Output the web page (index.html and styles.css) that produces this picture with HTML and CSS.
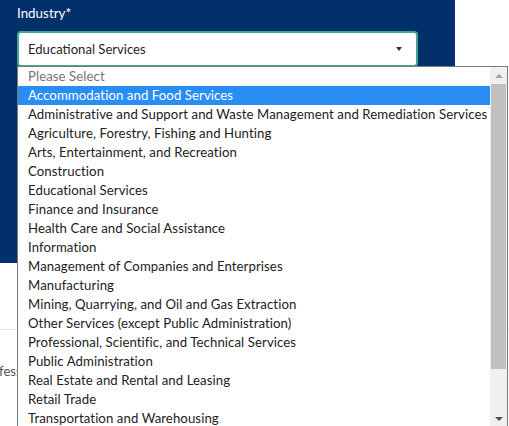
FILE: index.html
```html
<!DOCTYPE html>
<html>
<head>
<meta charset="utf-8">
<link rel="stylesheet" href="styles.css">
</head>
<body>
<div class="page">
  <section class="panel">
    <label class="label">Industry*</label>
    <div class="select">
      <span class="value">Educational Services</span>
      <span class="caret"></span>
    </div>
  </section>
  <div class="below">
    <hr class="rule">
    <div class="cut">fess</div>
  </div>

  <div class="dropdown">
    <ul class="options">
      <li class="placeholder">Please Select</li>
      <li class="active">Accommodation and Food Services</li>
      <li>Administrative and Support and Waste Management and Remediation Services</li>
      <li>Agriculture, Forestry, Fishing and Hunting</li>
      <li>Arts, Entertainment, and Recreation</li>
      <li>Construction</li>
      <li>Educational Services</li>
      <li>Finance and Insurance</li>
      <li>Health Care and Social Assistance</li>
      <li>Information</li>
      <li>Management of Companies and Enterprises</li>
      <li>Manufacturing</li>
      <li>Mining, Quarrying, and Oil and Gas Extraction</li>
      <li>Other Services (except Public Administration)</li>
      <li>Professional, Scientific, and Technical Services</li>
      <li>Public Administration</li>
      <li>Real Estate and Rental and Leasing</li>
      <li>Retail Trade</li>
      <li>Transportation and Warehousing</li>
    </ul>
    <div class="scrollbar">
      <span class="arrow up"></span>
      <span class="thumb"></span>
      <span class="arrow down"></span>
    </div>
  </div>
</div>
</body>
</html>
```

FILE: styles.css
```css
* { box-sizing: border-box; }
html, body { margin: 0; padding: 0; background: #fff; }
body {
  font-family: "Lato", "Open Sans", sans-serif;
  width: 509px;
  height: 426px;
  overflow: hidden;
}
.page { position: relative; width: 509px; height: 426px; }
.panel {
  width: 455px;
  height: 263px;
  background: #02306a;
  padding: 4px 37px 0 17px;
  display: flex;
  flex-direction: column;
}
.label {
  color: #fff;
  font-size: 13.4px;
  line-height: 18px;
  height: 27px;
}
.select {
  width: 401px;
  height: 36px;
  border: 2px solid #3fa79a;
  border-radius: 4px;
  background: #fff;
  display: flex;
  align-items: center;
  padding: 0 14px 0 9px;
}
.value {
  flex: 1;
  color: #212529;
  font-size: 13.1px;
}
.caret {
  width: 0; height: 0;
  border-left: 3px solid transparent;
  border-right: 3px solid transparent;
  border-top: 4px solid #333;
}
.below { padding-top: 66px; }
.rule {
  margin: 0;
  border: 0;
  border-top: 1px solid #e4e4e4;
  width: 100%;
}
.cut {
  margin-top: 33px;
  font-size: 13.2px;
  color: #555;
  margin-left: -1px;
}
.dropdown {
  position: absolute;
  left: 17px;
  top: 66px;
  width: 491px;
  height: 362px;
  border: 1px solid #7a7a7a;
  background: #fff;
  display: flex;
  overflow: hidden;
}
.options {
  list-style: none;
  margin: 0;
  padding: 0;
  flex: 1;
  min-width: 0;
}
.options li {
  height: 19px;
  line-height: 18px;
  padding-left: 10px;
  font-size: 13.2px;
  letter-spacing: 0.08px;
  color: #222;
  white-space: nowrap;
}
.options .placeholder { color: #767676; }
.options .active { background: #2a8df4; color: #fff; }
.scrollbar {
  width: 17px;
  background: #f0f0f0;
  display: flex;
  flex-direction: column;
  align-items: center;
  padding: 0 1px;
}
.arrow {
  height: 17px;
  width: 100%;
  display: flex;
  align-items: center;
  justify-content: center;
}
.arrow::before {
  content: "";
  width: 0; height: 0;
  border-left: 4px solid transparent;
  border-right: 4px solid transparent;
}
.arrow.up::before { border-bottom: 4px solid #a3a3a3; }
.arrow.down::before { border-top: 4px solid #505050; }
.thumb {
  width: 100%;
  height: 285px;
  background: #c1c1c1;
  margin-bottom: auto;
}
```
